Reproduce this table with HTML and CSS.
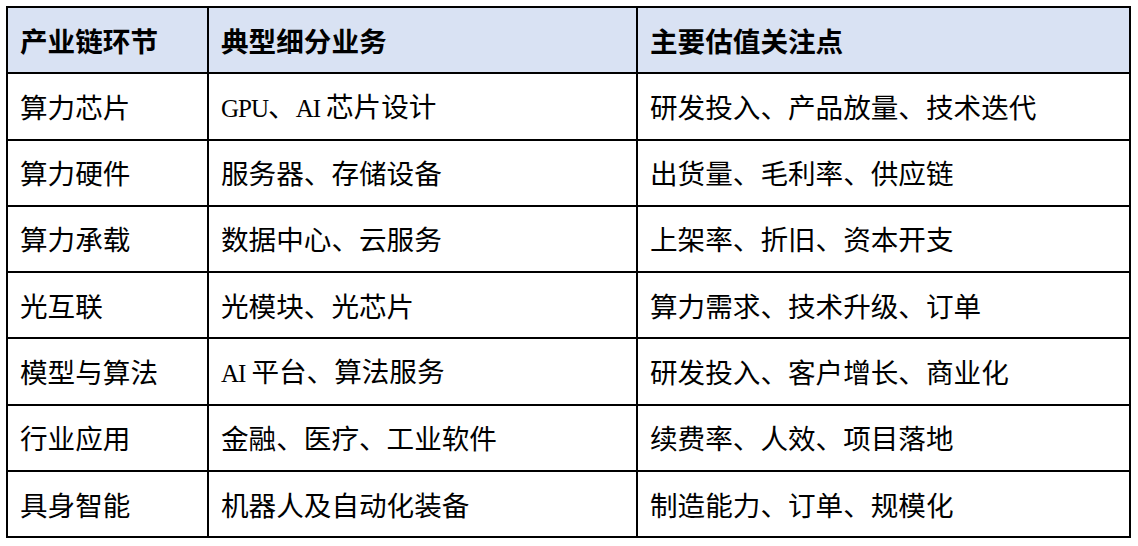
FILE: index.html
```html
<!DOCTYPE html>
<html lang="zh-CN">
<head>
<meta charset="utf-8">
<link rel="stylesheet" href="styles.css">
</head>
<body>
<div class="wrap">
<table class="chain">
<colgroup>
<col class="c1"><col class="c2"><col class="c3">
</colgroup>
<thead>
<tr><th>产业链环节</th><th>典型细分业务</th><th>主要估值关注点</th></tr>
</thead>
<tbody>
<tr><td>算力芯片</td><td><span class="lat">GPU</span>、<span class="lat gap">AI</span>芯片设计</td><td>研发投入、产品放量、技术迭代</td></tr>
<tr><td>算力硬件</td><td>服务器、存储设备</td><td>出货量、毛利率、供应链</td></tr>
<tr><td>算力承载</td><td>数据中心、云服务</td><td>上架率、折旧、资本开支</td></tr>
<tr><td>光互联</td><td>光模块、光芯片</td><td>算力需求、技术升级、订单</td></tr>
<tr><td>模型与算法</td><td><span class="lat gap">AI</span>平台、算法服务</td><td>研发投入、客户增长、商业化</td></tr>
<tr><td>行业应用</td><td>金融、医疗、工业软件</td><td>续费率、人效、项目落地</td></tr>
<tr><td>具身智能</td><td>机器人及自动化装备</td><td>制造能力、订单、规模化</td></tr>
</tbody>
</table>
</div>
</body>
</html>
```
FILE: styles.css
```css
html, body {
  margin: 0;
  padding: 0;
  background: #ffffff;
}
.wrap {
  padding: 6px 0 0 6px;
}
.chain {
  border-collapse: collapse;
  table-layout: fixed;
  width: 1123px;
  font-family: "Noto Sans CJK SC", sans-serif;
  font-size: 27.6px;
  color: #000;
}
.c1 { width: 201px; }
.c2 { width: 429px; }
.c3 { width: 493px; }
.chain th, .chain td {
  border: 2px solid #000;
  height: 64.3px;
  padding: 0 0 0 12px;
  text-align: left;
  vertical-align: middle;
  line-height: 1.2;
  white-space: nowrap;
}
.chain th {
  background: #d9e2f3;
  font-weight: 700;
}
.chain td {
  font-weight: 400;
}
.lat {
  font-family: "Liberation Serif", serif;
  font-size: 25px;
  letter-spacing: -1px;
}
.gap {
  margin-right: 6px;
}
```
